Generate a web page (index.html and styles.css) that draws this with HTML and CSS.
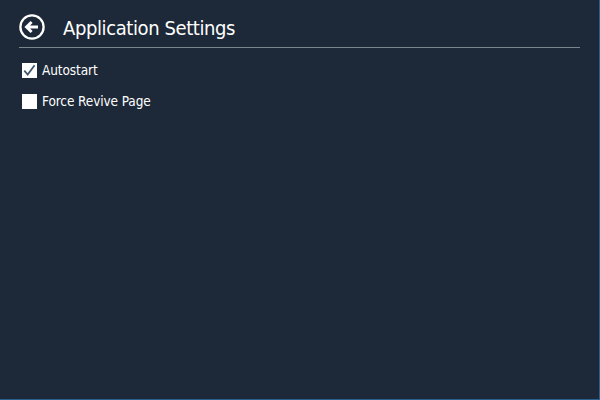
FILE: index.html
```html
<!DOCTYPE html>
<html lang="en">
<head>
<meta charset="utf-8">
<title>Application Settings</title>
<link rel="stylesheet" href="styles.css">
</head>
<body>
<main class="window">
  <header class="header">
    <svg class="back" viewBox="0 0 26 26" role="img" aria-label="Back">
      <circle cx="13" cy="13" r="11.6"/>
      <path d="M7.5 13H19M12.6 8L7.5 13l5.1 5"/>
    </svg>
    <h1 class="title">Application Settings</h1>
  </header>
  <div class="options">
    <div class="option">
      <span class="box"><svg class="check" viewBox="0 0 15 15"><path d="M2.3 7.6L5.7 11.6L12.6 2.3"/></svg></span>
      <span class="label">Autostart</span>
    </div>
    <div class="option">
      <span class="box"></span>
      <span class="label">Force Revive Page</span>
    </div>
  </div>
</main>
</body>
</html>
```

FILE: styles.css
```css
body {
  margin: 0;
  background: #1d2938;
  color: #fff;
  font-family: Tahoma, "DejaVu Sans Condensed", "DejaVu Sans", sans-serif;
  font-stretch: condensed;
}
.window {
  box-sizing: border-box;
  height: 400px;
  padding: 0 19px 0 19px;
  border-right: 1px solid #286090;
  border-bottom: 1px solid #286090;
}
.header {
  display: flex;
  align-items: center;
  box-sizing: border-box;
  height: 48px;
  padding-top: 7px;
  border-bottom: 1px solid #7b858c;
}
.back {
  width: 26px;
  height: 26px;
  fill: none;
  stroke: #fff;
  stroke-width: 2.3;
}
.back path { stroke-width: 2.9; }
.title {
  margin: 2px 0 0 18px;
  font-size: 20px;
  font-weight: 400;
  line-height: 26px;
  letter-spacing: -0.4px;
}
.options { padding: 13px 0 0 3px; }
.option {
  display: flex;
  align-items: center;
  height: 18px;
  margin-bottom: 13px;
}
.box {
  width: 15px;
  height: 15px;
  margin-right: 5px;
  background: #fff;
}
.check {
  display: block;
  width: 15px;
  height: 15px;
  fill: none;
  stroke: #43566d;
  stroke-width: 1.8;
}
.label {
  font-size: 13.5px;
  line-height: 18px;
  letter-spacing: -0.1px;
}
```
